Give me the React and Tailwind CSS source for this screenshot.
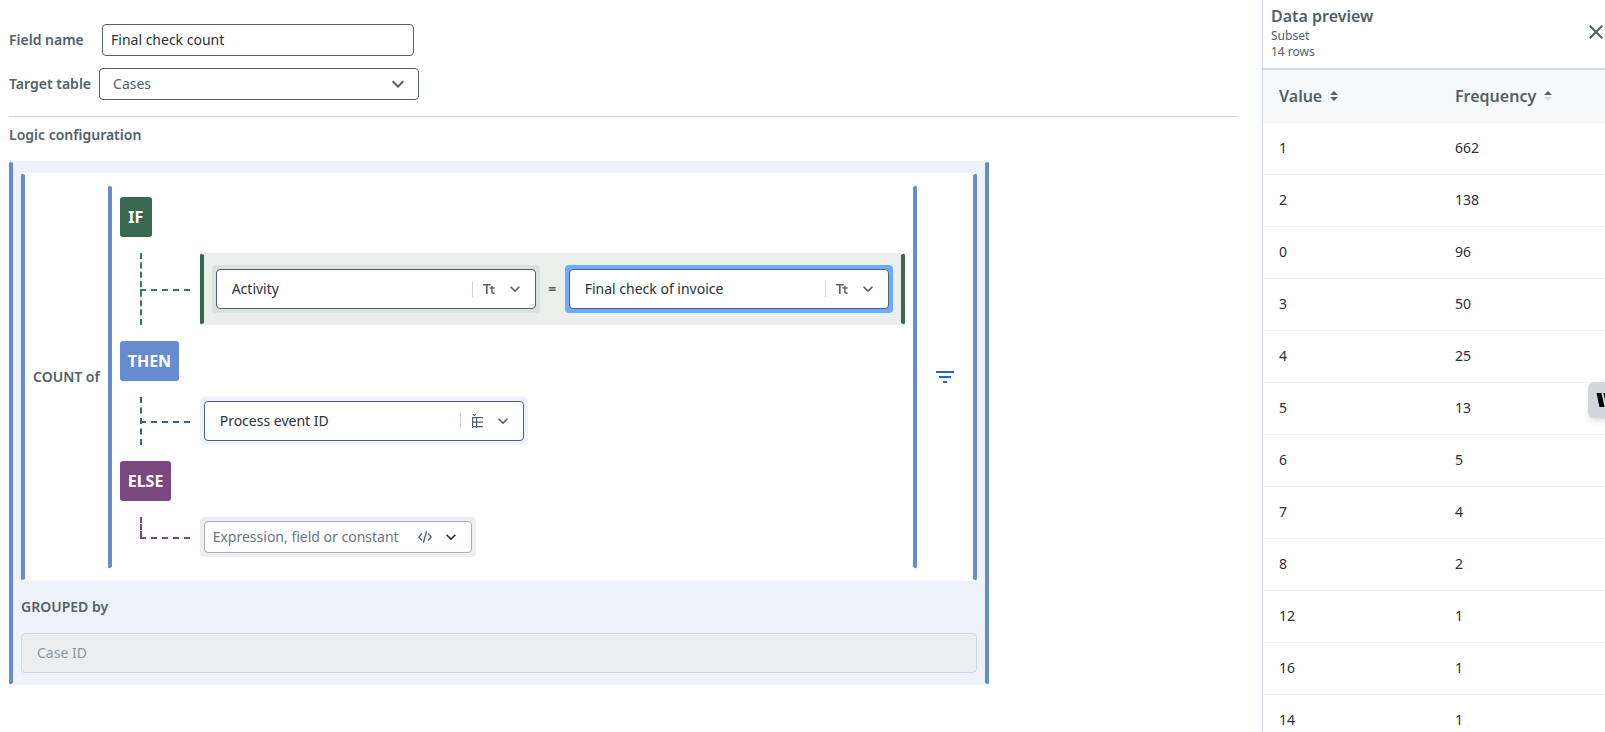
import { useState } from "react";
import { MdClose, MdExpandMore, MdFilterList } from "react-icons/md";

const rows = [
  [1, 662],
  [2, 138],
  [0, 96],
  [3, 50],
  [4, 25],
  [5, 13],
  [6, 5],
  [7, 4],
  [8, 2],
  [12, 1],
  [16, 1],
  [14, 1],
];

const tones = {
  green: { badge: "bg-[#3a6751]", line: "border-[#2f7d5b]", halo: "bg-[#d9e3dd]" },
  blue: { badge: "bg-[#678bd1]", line: "border-[#3d5a93]", halo: "bg-[#edf2fb]" },
  purple: { badge: "bg-[#7b4780]", line: "border-[#7b4780]", halo: "bg-[#f1ecf2]" },
  focus: { halo: "bg-[#6eabff]" },
};

function TextTypeIcon() {
  return (
    <svg width="12" height="12" viewBox="0 0 12 12" fill="none" stroke="currentColor" strokeWidth="1.6" aria-hidden="true">
      <path d="M0 1.8h7.6M3.8 1.8V11" />
      <path d="M6.6 5h5M8.9 2.8v6.1q0 1.3 1.3 1.3h1.4" strokeWidth="1.4" />
    </svg>
  );
}

function TableTypeIcon() {
  return (
    <svg width="12" height="14" viewBox="0 0 12 14" fill="none" stroke="currentColor" strokeWidth="1.2" aria-hidden="true">
      <path d="M1.6 3V14M5.6 3V14M1 3.6h11M1 8.1h11M1 12.6h11" />
      <path d="M1.8 0l1.6 1.5L5 0" />
    </svg>
  );
}

function CodeIcon() {
  return (
    <svg width="14" height="12" viewBox="0 0 14 12" fill="none" stroke="currentColor" strokeWidth="1.4" aria-hidden="true">
      <path d="M4 2.4L.9 6 4 9.6M10 2.4L13.1 6 10 9.6M8.6.2L5.4 11.8" />
    </svg>
  );
}

function SortIcon({ ascending }) {
  return (
    <svg width="8" height="10" viewBox="0 0 8 10" fill="currentColor" aria-hidden="true">
      <path d="M4 0l4 4H0z" />
      <path d="M4 10L0 6h8z" className={ascending ? "text-[#cfd8dd]" : ""} />
    </svg>
  );
}

// 4px side rails; the transparent top and bottom edges give them bevelled ends
function Rails({ className, children }) {
  return (
    <div className={`rounded-[3px] border-x-4 border-y-2 border-y-transparent px-2 py-2.5 ${className}`}>{children}</div>
  );
}

function Badge({ tone, children }) {
  return (
    <div className={`flex h-10 w-fit min-w-8 items-center justify-center rounded-[3px] px-2 text-base font-bold text-white ${tones[tone].badge}`}>
      {children}
    </div>
  );
}

function Branch({ tone, last, children }) {
  const line = tones[tone].line;
  return (
    <div className="flex">
      <div className="relative mr-2.5 ml-5 w-[50px]">
        <div className={`border-l-2 border-dashed ${line} ${last ? "h-1/2" : "h-full"}`} />
        <div className={`absolute top-1/2 left-0 w-full border-t-2 border-dashed ${line}`} />
      </div>
      {children}
    </div>
  );
}

function FieldSelect({ label, value, tone, icon }) {
  return (
    <div className={`w-fit rounded p-1 ${tones[tone].halo}`}>
      <div className="flex h-10 w-80 items-center rounded border border-[#526069] bg-white pr-2.5 pl-[15px] text-[#526069]">
        <select aria-label={label} className="min-w-0 flex-1 appearance-none text-[#273139] outline-none">
          <option>{value}</option>
        </select>
        <span className="h-4 w-px bg-[#cfd8dd]" />
        <span className="flex w-8 items-center justify-center">{icon}</span>
        <MdExpandMore size={20} />
      </div>
    </div>
  );
}

function LogicEditor() {
  return (
    <Rails className="w-fit border-x-[#678bd1] bg-[#edf2fb]">
      <Rails className="flex items-center border-x-[#678bd1] bg-white">
        <span className="mr-2 font-semibold">COUNT of</span>
        <Rails className="flex flex-col gap-4 border-x-[#678bd1] bg-white">
          <Badge tone="green">IF</Badge>
          <Branch tone="green">
            <Rails className="flex items-center gap-2 border-x-[#3a6751] bg-[#eaefeb]">
              <FieldSelect label="Compared field" value="Activity" tone="green" icon={<TextTypeIcon />} />
              <span className="w-[9px] text-center font-bold">=</span>
              <FieldSelect label="Compared value" value="Final check of invoice" tone="focus" icon={<TextTypeIcon />} />
            </Rails>
          </Branch>
          <Badge tone="blue">THEN</Badge>
          <Branch tone="blue">
            <FieldSelect label="Then value" value="Process event ID" tone="blue" icon={<TableTypeIcon />} />
          </Branch>
          <Badge tone="purple">ELSE</Badge>
          <Branch tone="purple" last>
            <div className="rounded bg-[#f1ecf2] p-1">
              <div className="flex h-8 w-[268px] items-center rounded border border-[#a4b1b8] bg-white pr-2.5 pl-2">
                <input
                  aria-label="Else value"
                  placeholder="Expression, field or constant"
                  className="min-w-0 flex-1 outline-none placeholder:text-[#6b7882]"
                />
                <button aria-label="Edit expression" className="mr-[9px]">
                  <CodeIcon />
                </button>
                <button aria-label="Choose a field" className="text-[#273139]">
                  <MdExpandMore size={20} />
                </button>
              </div>
            </div>
          </Branch>
        </Rails>
        <button aria-label="Filter" className="ml-2 flex size-10 items-center justify-center text-[#2463e0]">
          <MdFilterList size={24} />
        </button>
      </Rails>
      <label htmlFor="group-by" className="block py-4 font-semibold">GROUPED by</label>
      <input
        id="group-by"
        disabled
        value="Case ID"
        className="block h-10 w-full rounded border border-[#cfd8dd] bg-[#ebedee] px-[15px] pb-0.5 text-[#8a97a0]"
      />
    </Rails>
  );
}

function DataPreview() {
  return (
    <aside className="w-[343px] shrink-0 overflow-hidden border-l border-[#cfd8dd]">
      <div className="w-[352px]">
        <header className="flex items-center justify-between border-b-2 border-[#cfd8dd] pt-1 pr-[7px] pb-2 pl-2">
          <div>
            <h2 className="text-base leading-6 font-semibold">Data preview</h2>
            <p className="text-xs">Subset</p>
            <p className="text-xs">14 rows</p>
          </div>
          <button aria-label="Close preview">
            <MdClose size={24} />
          </button>
        </header>
        <table className="w-full table-fixed text-left">
          <thead>
            <tr className="h-[52px] border-b border-[#f0f3f5] bg-[#f8f9fb] text-base">
              <th className="px-4 font-semibold">
                <button className="flex items-center gap-2">Value <SortIcon /></button>
              </th>
              <th className="px-4 font-semibold">
                <button className="flex items-center gap-2">Frequency <SortIcon ascending /></button>
              </th>
            </tr>
          </thead>
          <tbody className="text-[#273139]">
            {rows.map(([value, frequency]) => (
              <tr key={value} className="h-[52px] border-b border-[#f0f3f5]">
                <td className="px-4">{value}</td>
                <td className="px-4">{frequency}</td>
              </tr>
            ))}
          </tbody>
        </table>
      </div>
    </aside>
  );
}

export default function App() {
  const [name, setName] = useState("Final check count");

  return (
    <div className="flex h-screen overflow-hidden bg-white font-['Noto_Sans',sans-serif] text-sm text-[#526069]">
      <main className="min-w-0 flex-1 pt-6 pr-6 pl-[9px]">
        <div className="flex items-center">
          <label htmlFor="field-name" className="w-[93px] font-semibold">Field name</label>
          <input
            id="field-name"
            value={name}
            onChange={(e) => setName(e.target.value)}
            className="h-8 w-[312px] rounded border border-[#526069] px-2 pb-0.5 text-[#273139]"
          />
        </div>
        <div className="mt-3 flex items-center gap-2">
          <label htmlFor="target-table" className="font-semibold">Target table</label>
          <div className="flex h-8 w-80 items-center rounded border border-[#526069] pr-2 pl-[13px]">
            <select id="target-table" className="flex-1 appearance-none outline-none">
              <option>Cases</option>
            </select>
            <MdExpandMore size={24} />
          </div>
        </div>
        <hr className="mt-4 h-px border-0 bg-[#cfd8dd]" />
        <h2 className="mt-2 mb-4 font-semibold">Logic configuration</h2>
        <LogicEditor />
      </main>
      <DataPreview />
      <button
        aria-label="Open assistant"
        className="fixed top-[382px] -right-5 flex h-9 w-[37px] items-center rounded-md bg-[#d3d6da] pl-2 text-black shadow-md"
      >
        <svg width="24" height="14" viewBox="0 0 24 14" fill="currentColor" aria-hidden="true">
          <path d="M.5 0h5l3 14h-5zM7.5 0h5l3 14h-5z" />
        </svg>
      </button>
    </div>
  );
}
